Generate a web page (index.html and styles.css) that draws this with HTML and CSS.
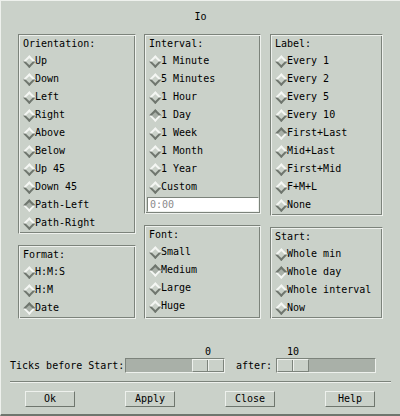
FILE: index.html
```html
<!DOCTYPE html>
<html>
<head>
<meta charset="utf-8">
<link rel="stylesheet" href="styles.css">
</head>
<body>
<div class="dialog">
  <div class="title">Io</div>
  <div class="panels">
    <div class="col col1">
      <div class="frame">
        <div class="flabel">Orientation:</div>
        <div class="opt"><span class="ind"></span>Up</div>
        <div class="opt"><span class="ind"></span>Down</div>
        <div class="opt"><span class="ind"></span>Left</div>
        <div class="opt"><span class="ind"></span>Right</div>
        <div class="opt"><span class="ind"></span>Above</div>
        <div class="opt"><span class="ind"></span>Below</div>
        <div class="opt"><span class="ind"></span>Up 45</div>
        <div class="opt"><span class="ind"></span>Down 45</div>
        <div class="opt"><span class="ind on"></span>Path-Left</div>
        <div class="opt"><span class="ind"></span>Path-Right</div>
      </div>
      <div class="frame bottom">
        <div class="flabel">Format:</div>
        <div class="opt"><span class="ind"></span>H:M:S</div>
        <div class="opt"><span class="ind"></span>H:M</div>
        <div class="opt"><span class="ind on"></span>Date</div>
      </div>
    </div>
    <div class="col col2">
      <div class="frame">
        <div class="flabel">Interval:</div>
        <div class="opt"><span class="ind"></span>1 Minute</div>
        <div class="opt"><span class="ind"></span>5 Minutes</div>
        <div class="opt"><span class="ind"></span>1 Hour</div>
        <div class="opt"><span class="ind on"></span>1 Day</div>
        <div class="opt"><span class="ind"></span>1 Week</div>
        <div class="opt"><span class="ind"></span>1 Month</div>
        <div class="opt"><span class="ind"></span>1 Year</div>
        <div class="opt"><span class="ind"></span>Custom</div>
        <div class="field">0:00</div>
      </div>
      <div class="frame bottom font-frame">
        <div class="flabel">Font:</div>
        <div class="opt"><span class="ind"></span>Small</div>
        <div class="opt"><span class="ind on"></span>Medium</div>
        <div class="opt"><span class="ind"></span>Large</div>
        <div class="opt"><span class="ind"></span>Huge</div>
      </div>
    </div>
    <div class="col col3">
      <div class="frame">
        <div class="flabel">Label:</div>
        <div class="opt"><span class="ind"></span>Every 1</div>
        <div class="opt"><span class="ind"></span>Every 2</div>
        <div class="opt"><span class="ind"></span>Every 5</div>
        <div class="opt"><span class="ind"></span>Every 10</div>
        <div class="opt"><span class="ind on"></span>First+Last</div>
        <div class="opt"><span class="ind"></span>Mid+Last</div>
        <div class="opt"><span class="ind"></span>First+Mid</div>
        <div class="opt"><span class="ind"></span>F+M+L</div>
        <div class="opt"><span class="ind"></span>None</div>
      </div>
      <div class="frame bottom">
        <div class="flabel">Start:</div>
        <div class="opt"><span class="ind"></span>Whole min</div>
        <div class="opt"><span class="ind on"></span>Whole day</div>
        <div class="opt"><span class="ind"></span>Whole interval</div>
        <div class="opt"><span class="ind"></span>Now</div>
      </div>
    </div>
  </div>
  <div class="scales">
    <div class="slabel first">Ticks before Start:</div>
    <div class="scale end">
      <div class="vrow"><span class="val">0</span></div>
      <div class="trough"><span class="thumb"></span></div>
    </div>
    <div class="slabel second">after:</div>
    <div class="scale start">
      <div class="vrow"><span class="val">10</span></div>
      <div class="trough"><span class="thumb"></span></div>
    </div>
  </div>
  <div class="sep"></div>
  <div class="buttons">
    <div class="btn">Ok</div>
    <div class="btn">Apply</div>
    <div class="btn">Close</div>
    <div class="btn">Help</div>
  </div>
</div>
</body>
</html>
```
FILE: styles.css
```css
html, body {
  margin: 0;
  padding: 0;
  background: #cad1c9;
}
body {
  font-family: "DejaVu Sans Mono", "Liberation Mono", monospace;
  font-size: 10px;
  color: #000;
}
.dialog {
  width: 400px;
  height: 416px;
  box-sizing: border-box;
  border-top: 1px solid #eef1ed;
  border-left: 1px solid #eef1ed;
  border-bottom: 2px solid #6f766e;
  padding-top: 7px;
  background: #cad1c9;
}
.title {
  line-height: 18px;
  text-align: center;
  height: 18px;
}
.panels {
  display: flex;
  gap: 8px;
  margin-top: 8px;
  margin-left: 17px;
  height: 285px;
}
.col {
  display: flex;
  flex-direction: column;
}
.col1 { width: 118px; }
.col2 { width: 117px; }
.col3 { width: 113px; margin-left: 1px; }
.frame {
  border: 1px solid;
  border-color: #7c837b #eef1ed #eef1ed #7c837b;
  box-shadow: inset 1px 1px 0 #eef1ed, inset -1px -1px 0 #7c837b;
  padding: 1px 3px 1px 4px;
}
.frame.bottom { margin-top: auto; }
.frame.font-frame { padding-bottom: 3px; }
.flabel {
  height: 16px;
  line-height: 16px;
  white-space: nowrap;
}
.opt {
  height: 18px;
  line-height: 18px;
  display: flex;
  align-items: center;
  white-space: nowrap;
}
.ind {
  width: 12px;
  height: 12px;
  flex: none;
  display: flex;
  align-items: center;
  justify-content: center;
}
.ind::before {
  content: "";
  width: 8.6px;
  height: 8.6px;
  box-sizing: border-box;
  border: 2px solid;
  border-color: #f4f6f3 #6f766e #6f766e #f4f6f3;
  background: #cad1c9;
  transform: rotate(45deg);
}
.ind.on::before {
  border-color: #6f766e #f4f6f3 #f4f6f3 #6f766e;
  background: #a9b0a8;
}
.field {
  margin: 1px 0 0 -2px;
  width: 112px;
  height: 15px;
  box-sizing: border-box;
  background: #fff;
  border: 1px solid;
  border-color: #7c837b #eef1ed #eef1ed #7c837b;
  line-height: 13px;
  padding-left: 2px;
  color: #8a8a8a;
}
.scales {
  display: flex;
  align-items: flex-end;
  margin-top: 27px;
  margin-left: 9px;
}
.slabel {
  line-height: 15px;
  height: 15px;
  white-space: nowrap;
}
.slabel.first { width: 115px; }
.slabel.second { width: 47px; padding-right: 4px; text-align: right; }
.scale {
  width: 100px;
  display: flex;
  flex-direction: column;
}
.vrow {
  height: 12px;
  line-height: 12px;
  display: flex;
  padding: 0 1px;
}
.scale.end .vrow { justify-content: flex-end; }
.scale.start .vrow { justify-content: flex-start; }
.val {
  width: 32px;
  text-align: center;
}
.trough {
  height: 15px;
  box-sizing: border-box;
  border: 1px solid;
  border-color: #7c837b #eef1ed #eef1ed #7c837b;
  background: #a9b0a8;
  display: flex;
}
.scale.end .trough { justify-content: flex-end; }
.scale.start .trough { justify-content: flex-start; }
.thumb {
  width: 32px;
  height: 13px;
  box-sizing: border-box;
  border: 1px solid;
  border-color: #eef1ed #7c837b #7c837b #eef1ed;
  background: #cad1c9;
  display: flex;
  justify-content: center;
}
.thumb::after {
  content: "";
  width: 1px;
  height: 100%;
  border-left: 1px solid #7c837b;
  background: #eef1ed;
}
.sep {
  margin-top: 8px;
  margin-left: 9px;
  width: 381px;
  height: 0;
  border-top: 1px solid #7c837b;
  border-bottom: 1px solid #eef1ed;
}
.buttons {
  display: flex;
  gap: 50px;
  margin-top: 8px;
  padding-left: 24px;
}
.btn {
  width: 50px;
  height: 16px;
  box-sizing: border-box;
  border: 1px solid;
  border-color: #eef1ed #6f766e #6f766e #eef1ed;
  text-align: center;
  line-height: 14px;
}
```
